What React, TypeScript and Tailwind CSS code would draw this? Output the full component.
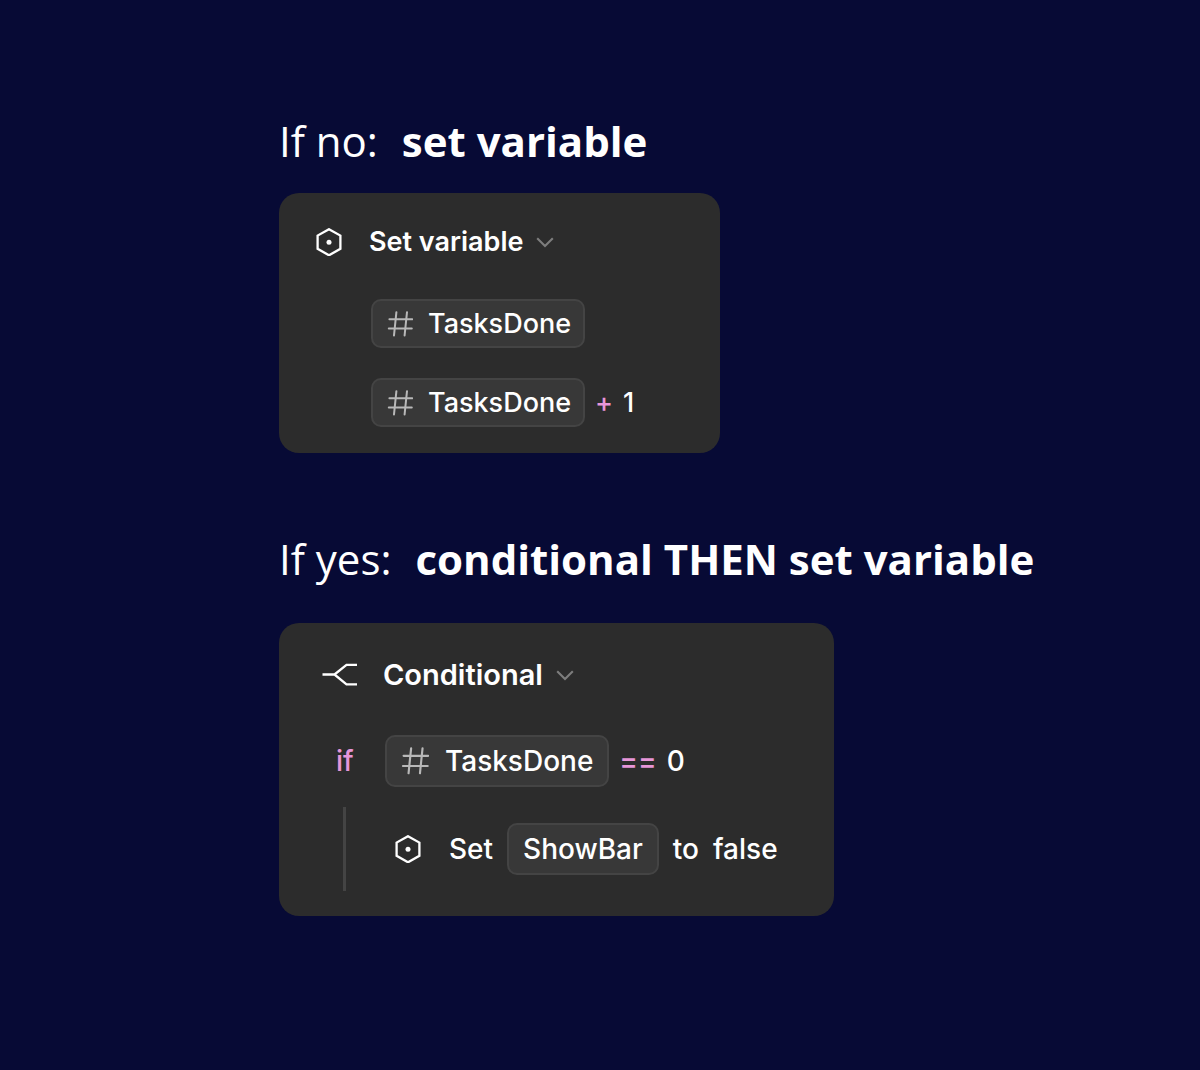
import type { ReactNode } from "react"
import clsx from "clsx"

const ACTIONS = ["Set variable", "Conditional"]

function HexagonIcon() {
  return (
    <svg className="h-7 w-7 shrink-0" viewBox="0 0 28 28" fill="none" aria-hidden="true">
      <path d="M14 1.2 25.4 7.6V20.8L14 27.3 2.6 20.8V7.6Z" stroke="#fff" strokeWidth="2.3" />
      <circle cx="14" cy="14.2" r="2.5" fill="#fff" />
    </svg>
  )
}

function BranchIcon() {
  return (
    <svg className="h-7 w-9 shrink-0" viewBox="0 0 36 28" fill="none" aria-hidden="true">
      <path d="M0.5 13.5H12.5L24.5 3.8H35M12.5 13.5L24.5 23.3H35" stroke="#fff" strokeWidth="2.3" />
    </svg>
  )
}

function ChevronIcon() {
  return (
    <svg className="h-5 w-5 shrink-0" viewBox="0 0 20 20" fill="none" aria-hidden="true">
      <path d="M2.2 6.2 10 14 17.8 6.2" stroke="#7d7d7d" strokeWidth="2.1" />
    </svg>
  )
}

function NumberIcon({ large }: { large?: boolean }) {
  return (
    <svg
      className={clsx("shrink-0", large ? "h-7 w-7" : "h-[26px] w-[26px]")}
      viewBox="0 0 26 26"
      fill="none"
      aria-hidden="true"
    >
      <path
        d="M2.4 8.2H25.2M1.8 17.6H24.8M9.4 1.2 7 24.4M20 1.2 17.6 24.4"
        stroke="#b8b8b8"
        strokeWidth="2"
        strokeLinecap="round"
      />
    </svg>
  )
}

function Heading({ label, children }: { label: string; children: ReactNode }) {
  return (
    <h2 className="flex flex-wrap gap-x-6 font-['Open_Sans','Noto_Sans',sans-serif] text-[42px] leading-[60px] font-bold">
      <span className="font-[370]">{label}</span>
      <span>{children}</span>
    </h2>
  )
}

function ActionSelect({ id, value }: { id: string; value: string }) {
  return (
    <label htmlFor={id} className="flex items-center gap-3">
      <select
        id={id}
        aria-label="Action"
        defaultValue={value}
        className="field-sizing-content appearance-none bg-transparent font-semibold"
      >
        {ACTIONS.map((action) => (
          <option key={action}>{action}</option>
        ))}
      </select>
      <ChevronIcon />
    </label>
  )
}

function Chip({ name, number, large }: { name: string; number?: boolean; large?: boolean }) {
  return (
    <button
      type="button"
      className={clsx(
        "flex items-center rounded-[10px] border-2 border-[#444444] bg-[#383838]",
        large ? "h-[52px] gap-4 px-[14px]" : "h-[49px] gap-[15px] pr-3 pl-[14px]"
      )}
    >
      {number && <NumberIcon large={large} />}
      {name}
    </button>
  )
}

export default function App() {
  return (
    <main className="min-h-screen bg-[#070a35] px-6 pt-[111px] pb-28 text-white md:pl-[279px]">
      <section>
        <Heading label="If no:">set variable</Heading>
        <div className="mt-[22px] max-w-[441px] rounded-[20px] bg-[#2c2c2c] pt-[31px] pb-[26px] pl-9 font-['Inter',sans-serif] text-[27px] leading-9 font-[450]">
          <div className="flex items-center gap-[26px]">
            <HexagonIcon />
            <ActionSelect id="action-no" value="Set variable" />
          </div>
          <div className="mt-[39px] flex flex-col gap-[30px] pl-14">
            <div className="flex items-center">
              <Chip name="TasksDone" number />
            </div>
            <div className="flex items-center gap-[10px]">
              <Chip name="TasksDone" number />
              <span className="font-medium text-[#e796d9]">+</span>
              <span>1</span>
            </div>
          </div>
        </div>
      </section>

      <section className="mt-[76px]">
        <Heading label="If yes:">conditional THEN set variable</Heading>
        <div className="mt-[34px] max-w-[555px] rounded-[20px] bg-[#2c2c2c] pt-[33px] pb-[25px] pl-[43px] font-['Inter',sans-serif] text-[28px] leading-[38px] font-[450]">
          <div className="flex items-center gap-[25px] text-[29px]">
            <BranchIcon />
            <ActionSelect id="action-yes" value="Conditional" />
          </div>
          <div className="mt-[41px] flex items-center pl-[14px]">
            <span className="w-[49px] text-[#e796d9]">if</span>
            <Chip name="TasksDone" number large />
            <span className="ml-[10px] font-medium text-[#e796d9]">==</span>
            <span className="ml-[10px]">0</span>
          </div>
          <div className="mt-5 ml-[21px] flex items-center border-l-[3px] border-[#444444] py-4 pl-12">
            <HexagonIcon />
            <span className="ml-[27px]">Set</span>
            <span className="mx-[14px]">
              <Chip name="ShowBar" large />
            </span>
            <span>to</span>
            <span className="ml-[14px]">false</span>
          </div>
        </div>
      </section>
    </main>
  )
}
